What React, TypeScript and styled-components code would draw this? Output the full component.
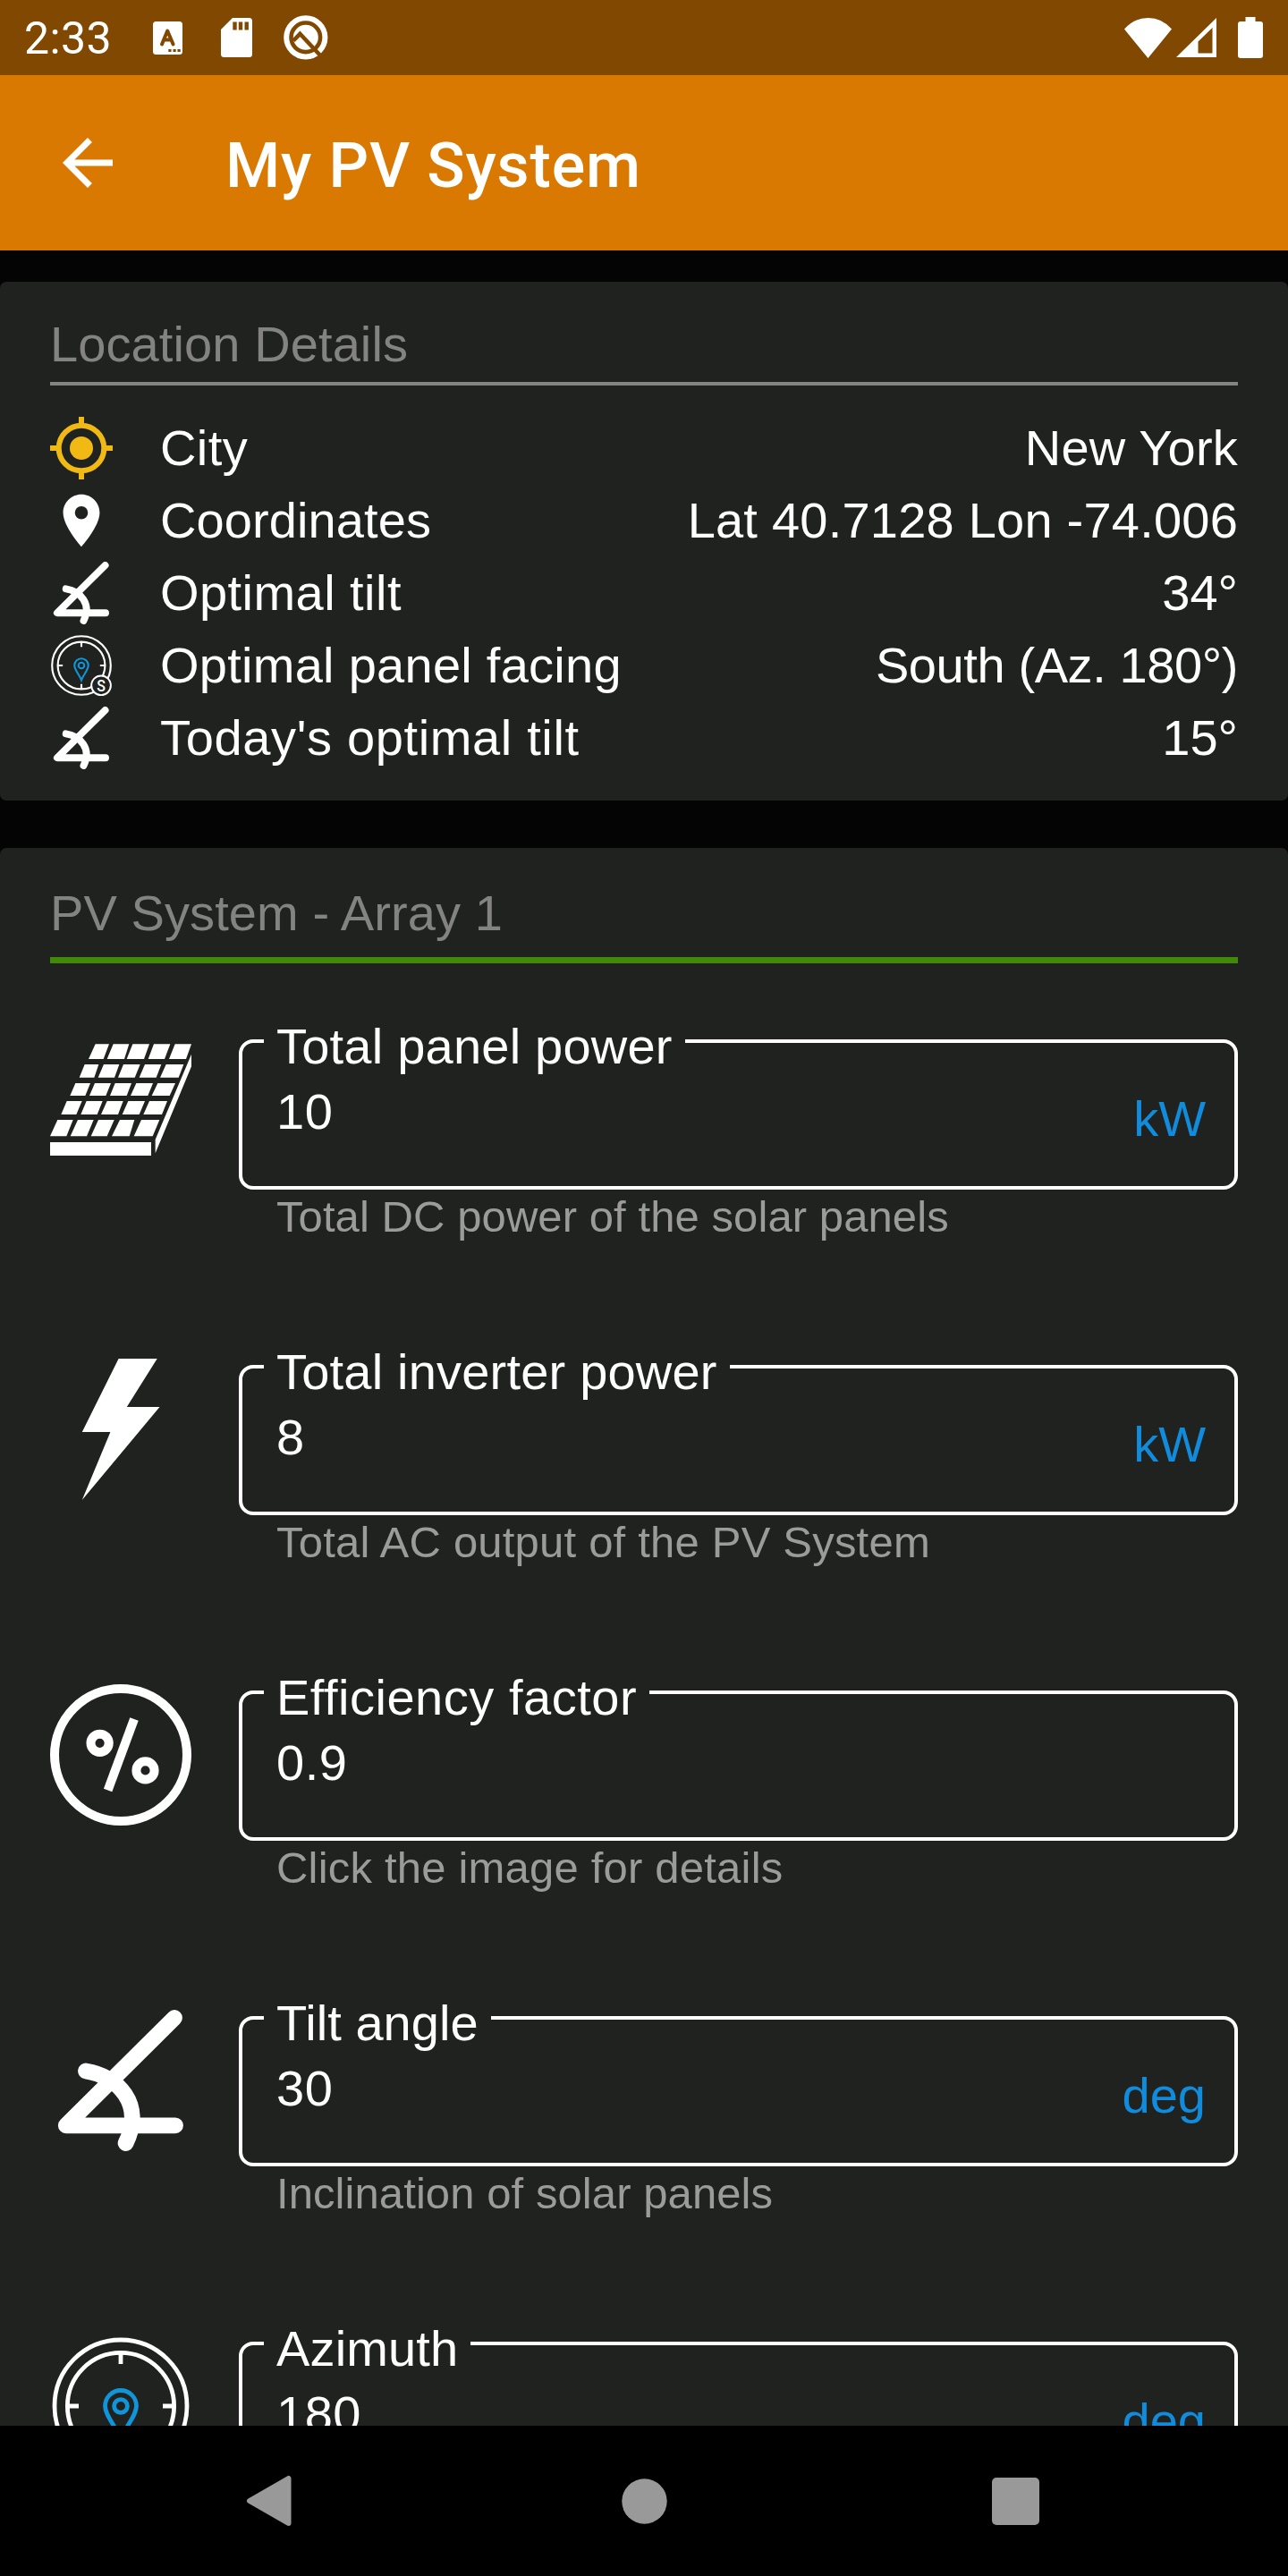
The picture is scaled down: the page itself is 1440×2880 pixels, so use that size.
import React from "react";
import styled, { createGlobalStyle } from "styled-components";

const bg = "#20221f";
const sans = `"Liberation Sans", Arial, sans-serif`;
const roboto = `Roboto, "Liberation Sans", sans-serif`;

const GlobalStyle = createGlobalStyle`
  *, *::before, *::after { box-sizing: border-box; }
  body { margin: 0; background: #040404; }
  svg { display: block; flex: none; }
`;

const Screen = styled.div`
  width: 1440px;
  height: 2880px;
  display: flex;
  flex-direction: column;
  overflow: hidden;
  background: #040404;
  color: #fff;
  font-family: ${sans};
  font-size: 56px;
  line-height: 64px;
  white-space: nowrap;
`;

const StatusBar = styled.div`
  height: 84px;
  flex: none;
  display: flex;
  align-items: center;
  justify-content: space-between;
  padding: 0 28px 0 27px;
  background: #804800;
`;

const StatusGroup = styled.div`
  display: flex;
  align-items: center;
`;

const Clock = styled.span`
  width: 144px;
  font: 400 50px/84px ${roboto};
  letter-spacing: 0.4px;
  padding-top: 2px;
`;

const StatusIcon = styled.svg<{ $before?: number }>`
  margin-left: ${(p) => p.$before ?? 0}px;
`;

const AppBar = styled.header`
  height: 196px;
  flex: none;
  display: flex;
  align-items: center;
  gap: 112px;
  padding: 0 56px;
  background: #da7902;
`;

const Title = styled.h1`
  margin: 0;
  padding-top: 6px;
  font: 500 70px/84px ${roboto};
  letter-spacing: 0.85px;
`;

const Content = styled.main`
  flex: 1;
  min-height: 0;
  overflow: hidden;
  display: flex;
  flex-direction: column;
  gap: 53px;
  padding-top: 35px;
`;

const Card = styled.section<{ $top: number }>`
  flex: none;
  padding: ${(p) => p.$top}px 56px 35px;
  border-radius: 7px;
  background: ${bg};
`;

const CardTitle = styled.h2`
  margin: 0;
  font-size: 56px;
  font-weight: 400;
  line-height: 64px;
  letter-spacing: 0.1px;
  color: #838481;
`;

const Divider = styled.div<{ $color: string; $size: number; $above: number; $below: number }>`
  height: ${(p) => p.$size}px;
  margin: ${(p) => p.$above}px 0 ${(p) => p.$below}px;
  background: ${(p) => p.$color};
`;

const DetailList = styled.div`
  display: flex;
  flex-direction: column;
  gap: 11px;
`;

const DetailRow = styled.div`
  height: 70px;
  display: grid;
  grid-template-columns: 70px 1fr auto;
  column-gap: 53px;
  align-items: center;
  line-height: 70px;
`;

const DetailText = styled.span<{ $track?: number }>`
  letter-spacing: ${(p) => p.$track ?? 0}px;
`;

const EntryRow = styled.div`
  height: 364px;
  display: grid;
  grid-template-columns: 158px 1fr;
  column-gap: 53px;
  align-items: start;
`;

const EntryIcon = styled.div`
  padding-top: 29px;
`;

const Outline = styled.fieldset`
  height: 204px;
  min-width: 0;
  margin: 0;
  padding: 0 32px 0 24px;
  border: 4px solid #fff;
  border-radius: 16px;
`;

const Legend = styled.legend<{ $track: number }>`
  padding: 12px 14px 0;
  letter-spacing: ${(p) => p.$track}px;
`;

const InputLine = styled.div`
  display: flex;
  justify-content: space-between;
  padding: 9px 0 0 14px;
`;

const InputValue = styled.span`
  letter-spacing: 0.5px;
`;

const Unit = styled.span`
  padding-top: 8px;
  color: #118bdc;
`;

const Helper = styled.div<{ $track: number }>`
  padding: 2px 0 0 42px;
  font-size: 49px;
  line-height: 56px;
  letter-spacing: ${(p) => p.$track}px;
  color: #9b9c9a;
`;

const NavBar = styled.nav`
  height: 168px;
  flex: none;
  display: grid;
  grid-template-columns: 420px 1fr 420px;
  align-items: center;
  padding: 0 92px;
  background: #000;
`;

const NavButton = styled.div<{ $nudge?: number }>`
  display: flex;
  justify-content: center;
  padding-right: ${(p) => p.$nudge ?? 0}px;
`;

const GpsIcon = () => (
  <svg width="70" height="70" viewBox="0 0 70 70" fill="none" stroke="#f0b913" strokeWidth="6">
    <circle cx="35" cy="35" r="25.3" />
    <path d="M35 0v9M35 61v9M0 35h9M61 35h9" />
    <circle cx="35" cy="35" r="13" fill="#f0b913" stroke="none" />
  </svg>
);

const PinIcon = () => (
  <svg width="70" height="70" viewBox="0 0 24 24" fill="#fff">
    <path d="M12 2C8.13 2 5 5.13 5 9c0 5.25 7 13 7 13s7-7.75 7-13c0-3.87-3.13-7-7-7zm0 9.5a2.5 2.5 0 0 1 0-5 2.5 2.5 0 0 1 0 5z" />
  </svg>
);

const AngleIcon = ({ size }: { size: number }) => (
  <svg width={size} height={size} viewBox="0 0 158 158" fill="none" stroke="#fff" strokeWidth="17.8" strokeLinecap="round" strokeLinejoin="round">
    <path d="M139 9L17.8 129.3H140" />
    <path d="M40 68.5C76 74 106 106 84.6 149" />
  </svg>
);

const CompassIcon = ({ size, badge }: { size: number; badge?: boolean }) => (
  <svg width={size} height={size} viewBox="0 0 158 158" fill="none" stroke="#fff" strokeWidth="4.8">
    <circle cx="79" cy="79" r="74" />
    <circle cx="79" cy="79" r="59.6" />
    <path d="M79 18v14M79 126v14M18 79h14M126 79h14" />
    <g stroke="#1095d9">
      <path d="M79 116C74 102 61.5 90 61.5 79a17.5 17.5 0 0 1 35 0C96.5 90 84 102 79 116z" />
      <circle cx="79" cy="79" r="7.4" />
    </g>
    {badge && (
      <>
        <circle cx="128.7" cy="129.3" r="24.5" fill={bg} strokeWidth="4.4" />
        <text transform="translate(128.7 143.6) scale(.88 1)" textAnchor="middle" fill="#fff" stroke="none" fontFamily={roboto} fontSize="41" fontWeight="500">
          S
        </text>
      </>
    )}
  </svg>
);

/* Each cell row: top y, bottom y, then [topLeft, topRight, bottomLeft, bottomRight] per cell. */
const cellRows: { y: [number, number]; cells: number[][] }[] = [
  { y: [52, 102], cells: [[170, 216, 147, 197], [230, 283, 209, 267], [295, 351, 275, 333], [366, 421, 347, 402], [437, 492, 417, 474]] },
  { y: [120, 164], cells: [[134, 181, 116, 166], [198, 250, 179, 234], [264, 320, 246, 302], [336, 391, 317, 374], [407, 466, 387, 449]] },
  { y: [183, 225], cells: [[103, 153, 85, 136], [168, 222, 150, 205], [236, 291, 219, 275], [307, 363, 288, 346], [379, 438, 359, 419]] },
  { y: [243, 288], cells: [[74, 125, 55, 106], [140, 194, 121, 176], [209, 263, 189, 246], [280, 336, 260, 317], [351, 411, 331, 393]] },
  { y: [306, 361], cells: [[43, 95, 18, 73], [111, 164, 86, 141], [180, 233, 155, 209], [252, 301, 225, 284], [324, 385, 299, 362]] },
];

const SolarPanelIcon = () => (
  <svg width="158" height="158" viewBox="18 15 474 474" fill="#fff">
    {cellRows.map(({ y: [t, b], cells }) =>
      cells.map(([tl, tr, bl, br]) => <path key={`${t}-${tl}`} d={`M${tl} ${t}H${tr}L${br} ${b}H${bl}Z`} />)
    )}
    <path d="M18 381H357V426H18ZM492 86V127L371 418V372Z" />
  </svg>
);

const BoltIcon = () => (
  <svg width="158" height="158" viewBox="0 0 158 158" fill="#fff">
    <path d="M76.6 0H119.7L85.8 54H122.5L35.8 158L67.4 82H35.8Z" />
  </svg>
);

const PercentIcon = () => (
  <svg width="158" height="158" viewBox="0 0 158 158" fill="none" stroke="#fff" strokeWidth="10">
    <circle cx="79" cy="79" r="74" />
    <circle cx="55.6" cy="65.8" r="10.1" />
    <circle cx="106.5" cy="96.4" r="10.1" />
    <path d="M94 39L64.6 118.4" />
  </svg>
);

const details = [
  { icon: <GpsIcon />, label: "City", track: 0.4, value: "New York", valueTrack: 0.2 },
  { icon: <PinIcon />, label: "Coordinates", track: 0.1, value: "Lat 40.7128 Lon -74.006", valueTrack: 0.22 },
  { icon: <AngleIcon size={70} />, label: "Optimal tilt", track: 0.45, value: "34°", valueTrack: 0 },
  { icon: <CompassIcon size={70} badge />, label: "Optimal panel facing", track: 0.27, value: "South (Az. 180°)", valueTrack: -0.4 },
  { icon: <AngleIcon size={70} />, label: "Today's optimal tilt", track: 0.65, value: "15°", valueTrack: 0 },
];

const entries = [
  { icon: <SolarPanelIcon />, label: "Total panel power", track: 0.22, value: "10", unit: "kW", help: "Total DC power of the solar panels", helpTrack: 0.08 },
  { icon: <BoltIcon />, label: "Total inverter power", track: 0.2, value: "8", unit: "kW", help: "Total AC output of the PV System", helpTrack: 0.2 },
  { icon: <PercentIcon />, label: "Efficiency factor", track: 0.52, value: "0.9", unit: "", help: "Click the image for details", helpTrack: 0.2 },
  { icon: <AngleIcon size={158} />, label: "Tilt angle", track: 0.05, value: "30", unit: "deg", help: "Inclination of solar panels", helpTrack: 0.08 },
  { icon: <CompassIcon size={158} />, label: "Azimuth", track: 0.15, value: "180", unit: "deg", help: "", helpTrack: 0 },
];

export default function App() {
  return (
    <Screen>
      <GlobalStyle />
      <StatusBar>
        <StatusGroup>
          <Clock>2:33</Clock>
          <StatusIcon width="33" height="37" viewBox="0 0 33 37">
            <rect width="33" height="37" rx="3.5" fill="#fff" />
            <path d="M10 25.5L16.2 10.5L22.6 25.5M12.5 20.5H20" fill="none" stroke="#804800" strokeWidth="4" strokeLinecap="round" strokeLinejoin="round" />
            <path d="M17.3 31h3.2v3h-3.2zM22.5 31h3.2v3h-3.2zM27.5 31h3.2v3h-3.2z" fill="#804800" />
          </StatusIcon>
          <StatusIcon $before={43} width="35" height="44" viewBox="0 0 35 44">
            <path d="M13 0H31.5Q35 0 35 3.5V40.5Q35 44 31.5 44H3.5Q0 44 0 40.5V13Z" fill="#fff" />
            <path d="M13.3 4.5h4.4v9h-4.4zM19.8 4.5h4.4v9h-4.4zM26.5 4.5h4.4v9h-4.4z" fill="#804800" />
          </StatusIcon>
          <StatusIcon $before={35} width="50" height="50" viewBox="0 0 50 50" fill="none">
            <circle cx="24.8" cy="24.8" r="21.6" stroke="#fff" strokeWidth="6" />
            <circle cx="24.8" cy="24.8" r="14" fill="#fff" />
            <path d="M11 28.5L18.4 20.8L42 46" stroke="#804800" strokeWidth="4.6" />
          </StatusIcon>
        </StatusGroup>
        <StatusGroup>
          <StatusIcon width="53" height="45" viewBox="0 0 53 45" fill="#fff">
            <path d="M0 12.5Q11 0 26.5 0T53 12.5L26.5 45Z" />
          </StatusIcon>
          <StatusIcon $before={5} width="45" height="44" viewBox="0 0 45 44" fill="#fff">
            <path fillRule="evenodd" d="M0 44L45 0V44ZM24.5 26.5V39.5H40.5V11Z" />
          </StatusIcon>
          <StatusIcon $before={24} width="28" height="46" viewBox="0 0 28 46" fill="#fff">
            <path d="M8.5 0H19.5V5H25Q28 5 28 8V43Q28 46 25 46H3Q0 46 0 43V8Q0 5 3 5H8.5Z" />
          </StatusIcon>
        </StatusGroup>
      </StatusBar>

      <AppBar>
        <svg width="84" height="84" viewBox="0 0 24 24" fill="#fff">
          <path d="M20 11H7.83l5.59-5.59L12 4l-8 8 8 8 1.41-1.41L7.83 13H20v-2z" />
        </svg>
        <Title>My PV System</Title>
      </AppBar>

      <Content>
        <Card $top={38}>
          <CardTitle>Location Details</CardTitle>
          <Divider $color="#838580" $size={4} $above={10} $below={35} />
          <DetailList>
            {details.map((d) => (
              <DetailRow key={d.label}>
                {d.icon}
                <DetailText $track={d.track}>{d.label}</DetailText>
                <DetailText $track={d.valueTrack}>{d.value}</DetailText>
              </DetailRow>
            ))}
          </DetailList>
        </Card>

        <Card $top={41}>
          <CardTitle>PV System - Array 1</CardTitle>
          <Divider $color="#408a08" $size={7} $above={17} $below={49} />
          {entries.map((e) => (
            <EntryRow key={e.label}>
              <EntryIcon>{e.icon}</EntryIcon>
              <div>
                <Outline>
                  <Legend $track={e.track}>{e.label}</Legend>
                  <InputLine>
                    <InputValue>{e.value}</InputValue>
                    <Unit>{e.unit}</Unit>
                  </InputLine>
                </Outline>
                <Helper $track={e.helpTrack}>{e.help}</Helper>
              </div>
            </EntryRow>
          ))}
        </Card>
      </Content>

      <NavBar>
        <NavButton $nudge={3}>
          <svg width="51" height="58" viewBox="0 0 51 58" fill="#999" stroke="#999" strokeWidth="6" strokeLinejoin="round">
            <path d="M4 29L47.5 4V54Z" />
          </svg>
        </NavButton>
        <NavButton>
          <svg width="51" height="51" viewBox="0 0 51 51" fill="#999">
            <circle cx="25.5" cy="25.5" r="25.2" />
          </svg>
        </NavButton>
        <NavButton $nudge={6}>
          <svg width="53" height="53" viewBox="0 0 53 53" fill="#999">
            <rect width="53" height="53" rx="5" />
          </svg>
        </NavButton>
      </NavBar>
    </Screen>
  );
}
